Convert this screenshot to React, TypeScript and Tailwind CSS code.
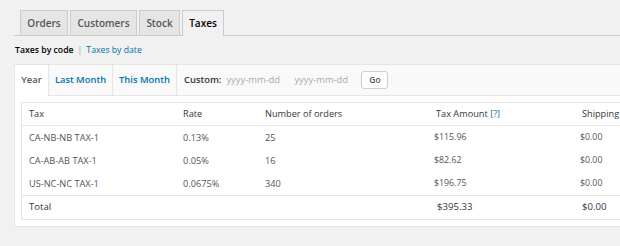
import React from 'react'

const tabs = [
  { label: 'Orders', w: 'w-[48px]' },
  { label: 'Customers', w: 'w-[67px]' },
  { label: 'Stock', w: 'w-[41px]' },
  { label: 'Taxes', w: 'w-[42px]', active: true },
]

const rows = [
  { tax: 'CA-NB-NB TAX-1', rate: '0.13%', orders: '25', amount: '$115.96', shipping: '$0.00' },
  { tax: 'CA-AB-AB TAX-1', rate: '0.05%', orders: '16', amount: '$82.62', shipping: '$0.00' },
  { tax: 'US-NC-NC TAX-1', rate: '0.0675%', orders: '340', amount: '$196.75', shipping: '$0.00' },
]

const cols = 'grid grid-cols-[154px_82px_171px_146px_1fr]'

export default function App() {
  return (
    <div className="h-[246px] w-[620px] overflow-hidden bg-[#f1f1f1] font-['Open_Sans',sans-serif]">
      {/* report tabs */}
      <div className="ml-[14px] flex gap-[2px] border-b border-[#ccc] pl-[6px] pt-[10px]">
        {tabs.map((t) => (
          <div
            key={t.label}
            className={
              t.active
                ? `${t.w} -mb-px flex h-[26px] items-center justify-center border border-b-0 border-[#ccc] bg-[#f1f1f1] text-[10px] font-semibold text-black`
                : `${t.w} flex h-[25px] items-center justify-center border border-b-0 border-[#ccc] bg-[#e5e5e5] text-[10px] font-semibold text-[#555]`
            }
          >
            {t.label}
          </div>
        ))}
      </div>

      <div className="ml-[15px] mt-[8px] flex h-[12px] items-center text-[8.7px] leading-none">
        <span className="font-semibold text-black">Taxes by code</span>
        <span className="mx-[4px] text-[#999]">|</span>
        <span className="text-[#0073aa]">Taxes by date</span>
      </div>

      {/* postbox */}
      <div className="ml-[14px] mt-[8px] w-[640px] border border-[#e5e5e5] bg-white">
        <div className="flex h-[31px] items-stretch border-b border-[#e5e5e5] bg-[#f9f9f9] text-[9.4px] font-semibold">
          <div className="-mb-px flex w-[34px] items-center justify-center border-r border-[#e5e5e5] bg-white text-[#555]">
            Year
          </div>
          <div className="flex w-[64px] items-center justify-center border-r border-[#e5e5e5] text-[#0073aa]">
            Last Month
          </div>
          <div className="flex w-[64px] items-center justify-center border-r border-[#e5e5e5] text-[#0073aa]">
            This Month
          </div>
          <div className="flex items-center pl-[7px]">
            <span className="text-[#32373c]">Custom:</span>
            <span className="ml-[5px] w-[68px] font-normal text-[#aaa]">yyyy-mm-dd</span>
            <span className="w-[67px] font-normal text-[#aaa]">yyyy-mm-dd</span>
            <span className="flex h-[18px] w-[27px] items-center justify-center rounded-[3px] border border-[#ccc] bg-white text-[8.5px] text-[#555]">
              Go
            </span>
          </div>
        </div>

        <div className="px-[6px] pb-[6px] pt-[6px]">
          <div className="border border-[#e5e5e5] text-[9.2px] text-[#555]">
            <div className={`${cols} h-[23px] items-center whitespace-nowrap border-b border-[#e5e5e5] text-[#32373c]`}>
              <div className="pl-[7px]">Tax</div>
              <div className="pl-[7px]">Rate</div>
              <div className="pl-[7px]">Number of orders</div>
              <div className="pl-[7px]">
                Tax Amount <span className="text-[#0073aa]">[?]</span>
              </div>
              <div className="pl-[7px]">Shipping</div>
            </div>
            {rows.map((r) => (
              <div key={r.tax} className={`${cols} h-[23px] items-center`}>
                <div className="pl-[7px]">{r.tax}</div>
                <div className="pl-[7px]">{r.rate}</div>
                <div className="pl-[7px]">{r.orders}</div>
                <div className="pl-[5px] text-[8.8px]">{r.amount}</div>
                <div className="pl-[5px] text-[8.8px]">{r.shipping}</div>
              </div>
            ))}
            <div className={`${cols} h-[24px] items-center border-t border-[#e5e5e5] text-[9.6px] text-[#32373c]`}>
              <div className="pl-[7px]">Total</div>
              <div />
              <div />
              <div className="pl-[8px]">$395.33</div>
              <div className="pl-[7px]">$0.00</div>
            </div>
          </div>
        </div>
      </div>
    </div>
  )
}
